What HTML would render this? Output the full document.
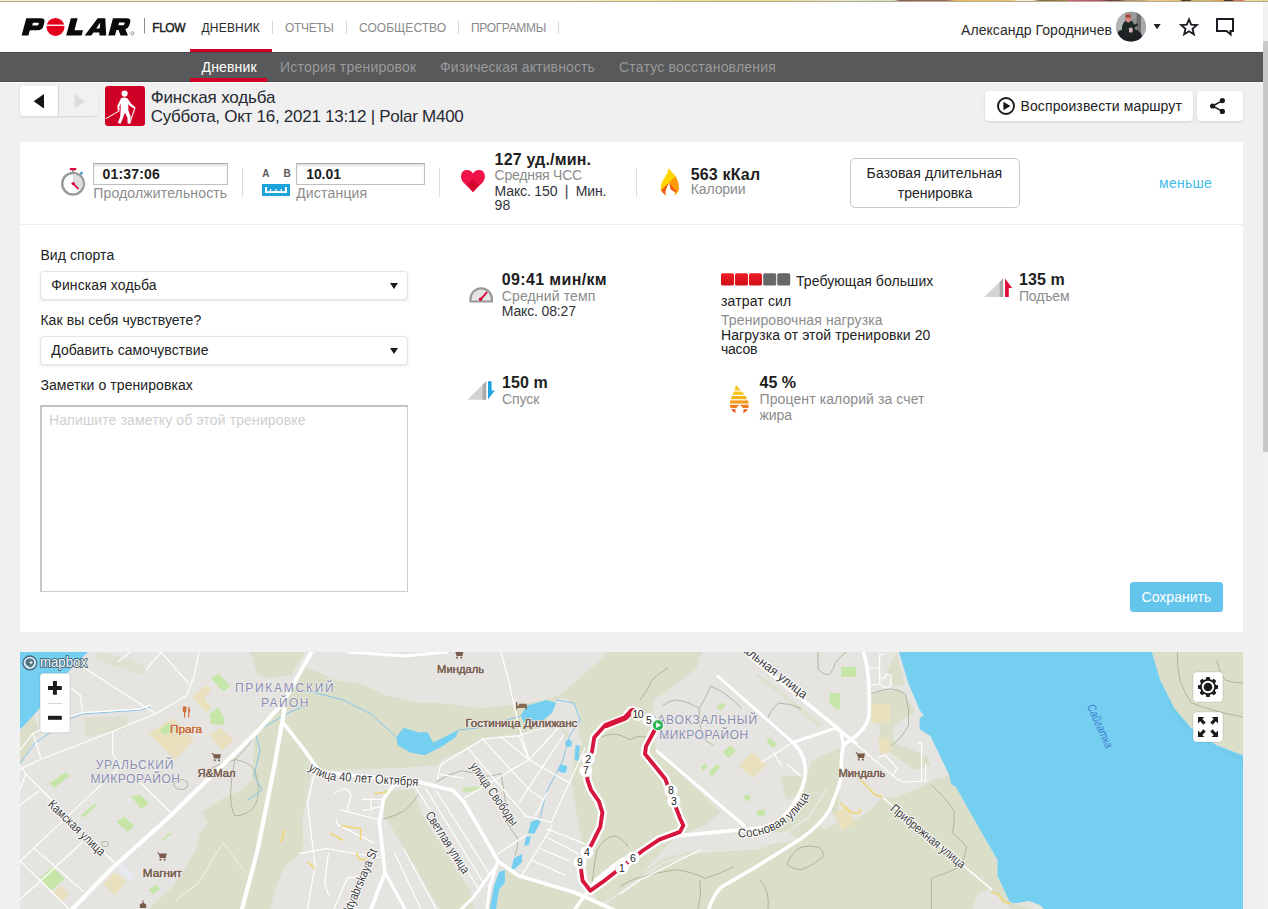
<!DOCTYPE html>
<html lang="ru">
<head>
<meta charset="utf-8">
<title>Polar Flow</title>
<style>
*{box-sizing:border-box;margin:0;padding:0}
html,body{width:1268px;height:909px;overflow:hidden;background:#f0f0f0}
body{font-family:"Liberation Sans",sans-serif;font-size:15px;color:#222;position:relative}
.abs{position:absolute}
.t{position:absolute;white-space:nowrap;line-height:1}
#topstrip{left:0;top:0;width:1268px;height:2px;background:linear-gradient(transparent 0,transparent 50%,#b3ad88 50%,#b3ad88 100%),linear-gradient(90deg,#f3efdc 0px,#f3efdc 560px,#efe6a8 620px,#ebdf90 760px,#e4e2d4 850px,#dcdcd0 894px,#8a5a60 900px,#9a6a68 947px,#e8b860 955px,#ecc470 1013px,#f4f0e4 1018px,#f0ead8 1033px,#80683c 1040px,#a08050 1066px,#c86080 1070px,#b85070 1100px,#6a3a4a 1110px,#7a4a50 1120px,#b08a70 1125px,#c8a078 1144px,#f0c890 1150px,#ecc080 1180px,#4a3020 1182px,#5a3c28 1190px,#d0b070 1192px,#d8b870 1212px,#e0a050 1214px,#e0a050 1223px,#3a2a2a 1225px,#4a3030 1232px,#d07060 1234px,#d07868 1243px,#f0d8a0 1246px,#ecd49c 1268px)}
#header{left:0;top:2px;width:1263px;height:50px;background:#fff}
#subnav{left:0;top:52px;width:1263px;height:30px;background:#58595b;border-top:1px solid #48494a;border-bottom:1px solid #4b4c4d;box-shadow:0 1px 0 #fafafa}
#sbar{left:1263px;top:2px;width:5px;height:907px;background:#f1f1f1}
#sthumb{left:1263px;top:41px;width:5px;height:411px;background:#c8c8c8}
.nav{font-size:12px;color:#8a8a8a;top:22px}
.navdiv{position:absolute;top:21px;width:1px;height:13px;background:#d6d6d6}
.sub{font-size:14px;color:#9a9a9a;top:60.4px}
.redbar{position:absolute;background:#d10027;height:3px}
.btn{position:absolute;background:#fff;border-radius:4px;box-shadow:0 1px 3px rgba(0,0,0,.13)}
.panel{position:absolute;background:#fff}
.gray{color:#8c8c8c}
.b{font-weight:bold;color:#1e1e1e}
.vdiv{position:absolute;top:168px;width:1px;height:29px;background:#dcdcdc}
.inp{position:absolute;top:163px;height:22px;background:#fff;border:1px solid #c0c0c0;border-top-color:#a9a9a9;box-shadow:inset 0 2px 2px rgba(0,0,0,.11)}
.sel{position:absolute;left:40px;width:368px;height:29px;background:#fff;border:1px solid #e4e4e4;border-radius:4px;box-shadow:0 1px 3px rgba(0,0,0,.11)}
.sel:after{content:"";position:absolute;left:349px;top:11px;border-left:4px solid transparent;border-right:4px solid transparent;border-top:6px solid #1c1c1c}
</style>
</head>
<body>
<div class="abs" id="header"></div>
<div class="abs" id="topstrip"></div>
<div class="abs" id="subnav"></div>
<div class="abs" id="sbar"></div>
<div class="abs" id="sthumb"></div>

<!-- HEADER -->
<svg class="abs" style="left:0;top:0" width="200" height="52" viewBox="0 0 200 52">
 <g transform="translate(0,35.6) skewX(-15) translate(0,-35.6)" fill="#0a0a0a" fill-rule="evenodd">
  <path d="M21.6,35.6 L21.6,18.2 L36,18.2 Q40.8,18.2 40.8,22.4 L40.8,25.9 Q40.8,30.2 36,30.2 L28.4,30.2 L28.4,35.6 Z M29.5,22.7 L34.6,22.7 Q35.6,22.7 35.6,24 Q35.6,25.4 34.6,25.4 L29.5,25.4 Z"/>
  <path d="M66.2,35.6 L66.2,18.2 L73,18.2 L73,30.2 L81.6,30.2 L81.6,35.6 Z"/>
  <path d="M84.7,35.6 L93,18.2 L100.6,18.2 L106.2,35.6 L99.4,35.6 L98.6,32.4 L92.6,32.4 L91.3,35.6 Z M94.3,28.6 L96.8,22.6 L97.8,28.6 Z"/>
  <path d="M108.3,35.6 L108.3,18.2 L122,18.2 Q126.6,18.2 126.6,22.2 L126.6,25 Q126.6,28.2 123.6,29 L127.9,35.6 L120.6,35.6 L117,30 L115,30 L115,35.6 Z M115.6,22.6 L120.4,22.6 Q121.4,22.6 121.4,23.8 Q121.4,25.2 120.4,25.2 L115.6,25.2 Z"/>
 </g>
 <circle cx="55.5" cy="26.9" r="9" fill="#e2001a"/>
 <rect x="46" y="24.6" width="19" height="1.3" fill="#fff"/>
 <circle cx="132.4" cy="33.4" r="1.6" fill="none" stroke="#333" stroke-width=".5"/>
 <rect x="144" y="18" width="1" height="15.5" fill="#8a8a8a"/>
</svg>
<span class="t" id="flow" style="left:152.3px;top:22px;font-size:12px;color:#222;font-weight:normal;-webkit-text-stroke:.45px #222;letter-spacing:-0.5px">FLOW</span>
<span class="t nav" id="n1" style="left:201.5px;color:#2a2a2a;letter-spacing:0.2px">ДНЕВНИК</span>
<span class="t nav" id="n2" style="left:285px;letter-spacing:-0.34px">ОТЧЕТЫ</span>
<span class="t nav" id="n3" style="left:359px;letter-spacing:0.03px">СООБЩЕСТВО</span>
<span class="t nav" id="n4" style="left:471px;letter-spacing:-0.34px">ПРОГРАММЫ</span>
<div class="navdiv" style="left:272px"></div>
<div class="navdiv" style="left:346px"></div>
<div class="navdiv" style="left:458px"></div>
<div class="navdiv" style="left:558px"></div>
<div class="redbar" style="left:190px;top:49px;width:82px"></div>

<span class="t" id="uname" style="left:961px;top:22.6px;font-size:14px;color:#2a2a2a;letter-spacing:0.06px">Александр Городничев</span>
<svg class="abs" style="left:1112px;top:8px" width="130" height="38" viewBox="1112 8 130 38">
 <defs><clipPath id="avc"><circle cx="1131" cy="26.700" r="14.900"/></clipPath></defs>
 <g clip-path="url(#avc)">
  <rect x="1116" y="11" width="30" height="31" fill="#8c8e90"/>
  <rect x="1116" y="12" width="9" height="18" fill="#b2b4b6"/>
  <rect x="1125" y="11" width="12" height="8" fill="#9a9c9e"/>
  <rect x="1136.500" y="12" width="4.500" height="26" fill="#6c6e70"/>
  <rect x="1141" y="14" width="5" height="22" fill="#a6a8aa"/>
  <ellipse cx="1129" cy="37" rx="13" ry="9" fill="#1d1f23"/>
  <ellipse cx="1128.500" cy="28.500" rx="6.600" ry="8.500" fill="#1e2925"/>
  <path d="M1132,27.500 L1137.600,24.300" stroke="#1e2925" stroke-width="2.200" fill="none"/>
  <circle cx="1128.300" cy="19.600" r="2.800" fill="#d3877c"/>
  <rect x="1125.500" y="14.600" width="5.600" height="3.200" rx="1" fill="#b5433e"/>
  <rect x="1129" y="27.800" width="3.600" height="4.800" rx=".8" fill="#d7b3bb"/>
 </g>
 <path d="M1153.5,24 L1160.7,24 L1157.1,29.2 Z" fill="#222"/>
 <path d="M1189.00,19.30 L1191.17,24.61 L1196.89,25.04 L1192.52,28.74 L1193.88,34.31 L1189.00,31.30 L1184.12,34.31 L1185.48,28.74 L1181.11,25.04 L1186.83,24.61 Z" fill="none" stroke="#1c1a22" stroke-width="1.800" stroke-linejoin="miter"/>
 <path d="M1217,19 L1233,19 L1233,31 L1230.6,31 L1230.6,34.4 L1226.6,31 L1217,31 Z" fill="none" stroke="#1c1a22" stroke-width="2" stroke-linejoin="miter"/>
</svg>

<!-- SUBNAV -->
<span class="t sub" id="s1" style="left:201.5px;color:#fff;letter-spacing:0.15px">Дневник</span>
<span class="t sub" id="s2" style="left:280px;letter-spacing:0.21px">История тренировок</span>
<span class="t sub" id="s3" style="left:440px;letter-spacing:0.12px">Физическая активность</span>
<span class="t sub" id="s4" style="left:619px;letter-spacing:0.19px">Статус восстановления</span>
<div class="redbar" style="left:190px;top:78px;width:77px;height:4px"></div>

<!-- TITLE ROW -->
<div class="btn" style="left:20px;top:86px;width:38px;height:30px;border-radius:4px 0 0 4px"></div>
<div class="abs" style="left:58px;top:86px;width:40px;height:30px;border-radius:0 4px 4px 0;background:#f1f1f1;box-shadow:0 1px 2px rgba(0,0,0,.10);border-left:1px solid #d8d8d8"></div>
<svg class="abs" style="left:20px;top:86px" width="80" height="30" viewBox="20 86 80 30">
 <path d="M44,94 L44,108.4 L33.6,101.2 Z" fill="#141414"/>
 <path d="M74.4,94 L74.4,108.4 L84.8,101.2 Z" fill="#dcdcdc"/>
</svg>
<svg class="abs" style="left:105px;top:86px" width="40" height="40" viewBox="0 0 40 40">
 <rect width="40" height="40" rx="3" fill="#d10027"/>
 <g fill="#fff" stroke="none">
  <circle cx="19.6" cy="7.6" r="3.1"/>
  <path d="M16.2,12 Q19.5,10.6 22.6,12.4 L26,17.6 L30.4,21.4 L29.4,22.8 L24.4,19.6 L23.2,18 L23.4,24.4 L25.6,30.2 L25.4,37.6 L22.6,37.6 L22.4,31.4 L19.8,26.4 L18.2,31.6 L15.6,37.8 L12.8,37 L15.2,30.6 L15.6,24 L15.8,17.6 L14.4,20.6 L14.6,24.4 L12.8,24.4 L12.4,19.8 Z"/>
 </g>
 <path d="M1,32.6 L14.6,24.6" stroke="#fff" stroke-width="1.1" fill="none"/>
 <path d="M30,21.8 L24.6,37.6" stroke="#fff" stroke-width="1.1" fill="none"/>
</svg>
<span class="t" id="ttl1" style="left:150.7px;top:88.50px;font-size:17px;color:#262a33;letter-spacing:-0.13px">Финская ходьба</span>
<span class="t" id="ttl2" style="left:150.7px;top:107.5px;font-size:17px;color:#262a33;letter-spacing:-0.27px">Суббота, Окт 16, 2021 13:12 | Polar M400</span>

<div class="btn" style="left:985px;top:91px;width:208px;height:30px"></div>
<div class="btn" style="left:1197px;top:91px;width:46px;height:30px"></div>
<svg class="abs" style="left:985px;top:91px" width="258" height="30" viewBox="985 91 258 30">
 <circle cx="1006" cy="106" r="8" fill="none" stroke="#1a1a1a" stroke-width="1.9"/>
 <path d="M1003.4,101.8 L1003.4,110.2 L1010.4,106 Z" fill="#1a1a1a"/>
 <g fill="#1a1a1a"><circle cx="1212.6" cy="106" r="2.6"/><circle cx="1222.4" cy="100.6" r="2.6"/><circle cx="1222.4" cy="111.4" r="2.6"/></g>
 <path d="M1222.4,100.6 L1212.6,106 L1222.4,111.4" fill="none" stroke="#1a1a1a" stroke-width="1.5"/>
</svg>
<span class="t" id="play" style="left:1020.5px;top:98.6px;font-size:14px;color:#222;letter-spacing:0.11px">Воспроизвести маршрут</span>

<!-- PANEL -->
<div class="panel" style="left:20px;top:142px;width:1223px;height:490px"></div>
<div class="abs" style="left:20px;top:224px;width:1223px;height:1px;background:#ededed"></div>

<!--SUMMARY-->
<svg class="abs" style="left:56px;top:150px" width="640" height="62" viewBox="56 150 640 62">
 <!-- stopwatch -->
 <rect x="72" y="170" width="2.2" height="3" fill="#9b9b9b"/>
 <rect x="69.8" y="168" width="6.4" height="2.2" fill="#d6083b"/>
 <path d="M79.800,173 L81.500,171.300 L83.200,173 L81.500,174.700 Z" fill="#29a3dc"/>
 <rect x="79.2" y="173.6" width="2.4" height="2.2" transform="rotate(45 80.4 174.7)" fill="#9b9b9b"/>
 <circle cx="73" cy="183.700" r="10.800" fill="#fff" stroke="#9b9b9b" stroke-width="2.500"/>
 <path d="M73,183.7 L73,173.9 A9.8,9.8 0 0 1 80.6,189.9 Z" fill="#dedede"/>
 <path d="M73.2,183.7 L78,188.6" stroke="#d6083b" stroke-width="1.7" stroke-linecap="round"/>
 <circle cx="73.2" cy="183.6" r="1.7" fill="#d6083b"/>
 <!-- distance ruler -->
 <rect x="262" y="184" width="28" height="12" fill="#1ea2dc"/>
 <g fill="#fff">
  <rect x="265" y="187" width="2" height="6"/><rect x="285" y="187" width="2" height="6"/>
  <rect x="265" y="191" width="22" height="2"/>
  <rect x="270" y="189" width="1.200" height="2.500"/><rect x="275.400" y="189" width="1.200" height="2.500"/><rect x="280.600" y="189" width="1.200" height="2.500"/>
 </g>
 <!-- heart -->
 <path d="M473,192.1 L463.2,182.2 C459.4,178.2 460.6,170 466.8,170 C470,170 472,171.8 473,173.6 C474,171.8 476,170 479.2,170 C485.4,170 486.6,178.2 482.8,182.2 Z" fill="#f0134a"/>
 <path d="M472.900,192.100 L466.700,185 L472.900,179 L479.100,185 Z" fill="#d7082f"/>
 <!-- flame -->
 <path d="M668.600,168.200 L675.200,175.800 Q678.400,181 679,187.700 Q679,190.500 677.200,192.400 L674.300,195.900 Q675.600,193.600 674.800,191.700 Q672.600,191 670.800,189.200 Q670,186 669,183 Q666.400,187 665.300,191.700 Q665.200,194 666.300,195.900 L661.900,191.700 Q660.200,189.600 660.600,187.700 Q661,184 662.400,181.300 L666.800,173.900 Q668.200,171 668.600,168.200 Z" fill="#ffd500"/>
 <path d="M675.600,175.900 Q678.400,181 679,187.700 Q679,190.500 677.200,192.400 L674.300,195.900 Q675.600,193.600 674.800,191.700 Q672.600,191 670.800,189.200 Q670,186 669,183 L669.200,182.400 Z" fill="#ff9a0a"/>
 <path d="M661.300,189.800 L669,183 Q666.400,187 665.300,191.700 Q665.200,194 666.300,195.900 L661.900,191.700 Q661,190.800 661.300,189.800 Z" fill="#f15a19"/>
 <path d="M669.600,183.800 L677,191.900 L674.800,191.700 Q672.600,191 670.800,189.200 Q670,186.400 669.600,183.800 Z" fill="#f4511e"/>
</svg>
<div class="inp" style="left:93px;width:135px"></div>
<div class="inp" style="left:296px;width:129px"></div>
<span class="t b" id="v1" style="left:102.6px;top:167.15px;font-size:14px;letter-spacing:0.17px">01:37:06</span>
<span class="t gray" id="l1" style="left:93.3px;top:186.45px;font-size:14px;letter-spacing:0.14px">Продолжительность</span>
<div class="vdiv" style="left:242px"></div>
<span class="t" id="ab1" style="left:262.2px;top:169.3px;font-size:10px;font-weight:bold;color:#5a5a5a">A</span>
<span class="t" id="ab2" style="left:283.4px;top:169.3px;font-size:10px;font-weight:bold;color:#5a5a5a">B</span>
<span class="t b" id="v2" style="left:306.2px;top:167.15px;font-size:14px;letter-spacing:-0.07px">10.01</span>
<span class="t gray" id="l2" style="left:296.2px;top:186.45px;font-size:14px;letter-spacing:0.19px">Дистанция</span>
<div class="vdiv" style="left:439px"></div>
<span class="t b" id="v3" style="left:494.6px;top:151.75px;font-size:16px;letter-spacing:0.17px">127 уд./мин.</span>
<span class="t gray" id="l3" style="left:494.6px;top:168.2px;font-size:14px;letter-spacing:-0.23px">Средняя ЧСС</span>
<span class="t" id="l3b" style="left:494.6px;top:184.15px;font-size:14px;color:#30323a;word-spacing:0;letter-spacing:-0.15px">Макс. 150&nbsp; |&nbsp; Мин.</span>
<span class="t" id="l3c" style="left:494.6px;top:197.65px;font-size:14px;color:#30323a">98</span>
<div class="vdiv" style="left:636px"></div>
<span class="t b" id="v4" style="left:690.7px;top:166.65px;font-size:16px;letter-spacing:0.17px">563 кКал</span>
<span class="t gray" id="l4" style="left:690.7px;top:182.40px;font-size:14px;letter-spacing:-0.11px">Калории</span>
<div class="abs" style="left:850px;top:158px;width:170px;height:50px;border:1px solid #c8c8c8;border-radius:5px;background:#fff"></div>
<span class="t" id="bt1" style="left:866.60px;top:166.2px;font-size:14px;color:#222;letter-spacing:0.11px">Базовая длительная</span>
<span class="t" id="bt2" style="left:897.80px;top:186.2px;font-size:14px;color:#222;letter-spacing:-0.03px">тренировка</span>
<span class="t" id="less" style="left:1159px;top:176.2px;font-size:14px;color:#41bce6;letter-spacing:0.26px">меньше</span>
<!--DETAILS-->
<span class="t" id="d1" style="left:40.4px;top:248.45px;font-size:14px;color:#222;letter-spacing:0.08px">Вид спорта</span>
<div class="sel" style="top:270.5px"></div>
<span class="t" id="d2" style="left:51.2px;top:278.15px;font-size:14px;color:#222;letter-spacing:0.1px">Финская ходьба</span>
<span class="t" id="d3" style="left:40.4px;top:313.45px;font-size:14px;color:#222;letter-spacing:0.07px">Как вы себя чувствуете?</span>
<div class="sel" style="top:335.5px"></div>
<span class="t" id="d4" style="left:51.2px;top:343.15px;font-size:14px;color:#222;letter-spacing:0.08px">Добавить самочувствие</span>
<span class="t" id="d5" style="left:40.4px;top:378.45px;font-size:14px;color:#222;letter-spacing:0.08px">Заметки о тренировках</span>
<div class="abs" style="left:40px;top:405px;width:368px;height:187px;background:#fff;border:1px solid #cdcdcd;border-top:2px solid #c2c2c2;border-left:2px solid #c6c6c6"></div>
<span class="t" id="d6" style="left:49.1px;top:413.45px;font-size:14px;color:#cfcfcf;letter-spacing:0.13px">Напишите заметку об этой тренировке</span>

<svg class="abs" style="left:460px;top:268px" width="560" height="150" viewBox="460 268 560 150">
 <!-- pace gauge -->
 <path d="M469.4,302.6 L469.4,299 A11.8,11.8 0 0 1 493,299 L493,302.6 Z" fill="#9a9a9a"/>
 <path d="M471.6,300.6 L471.6,299 A9.6,9.6 0 0 1 490.8,299 L490.8,300.6 Z" fill="#e4e4e4"/>
 <path d="M481.2,299.4 L481.2,289.6 A9.6,9.6 0 0 0 471.6,299.4 Z" fill="#d2d2d2" opacity=".0"/>
 <path d="M480.4,299.6 L486.6,292.6" stroke="#d6083b" stroke-width="1.9" stroke-linecap="round"/>
 <circle cx="480.6" cy="299.2" r="1.7" fill="#d6083b"/>
 <!-- load blocks -->
 <defs><linearGradient id="rg" x1="0" y1="0" x2="0" y2="1"><stop offset="0" stop-color="#ee1c25"/><stop offset="1" stop-color="#cf1019"/></linearGradient></defs>
 <rect x="721" y="273.2" width="13" height="12.3" rx="1.6" fill="url(#rg)"/>
 <rect x="735" y="273.2" width="13" height="12.3" rx="1.6" fill="url(#rg)"/>
 <rect x="749" y="273.2" width="13" height="12.3" rx="1.6" fill="url(#rg)"/>
 <rect x="763.2" y="273.2" width="13" height="12.3" rx="1.6" fill="#676767"/>
 <rect x="777.2" y="273.2" width="13" height="12.3" rx="1.6" fill="#676767"/>
 <!-- ascent -->
 <path d="M984.2,296.9 L1003.2,278.4 L1003.2,296.9 Z" fill="#d4d4d4"/>
 <path d="M999.6,282 L1003.2,278.4 L1003.2,296.9 L999.6,296.9 Z" fill="#a9a9a9"/>
 <path d="M1005,296.9 L1005,278.4 L1012.2,288 L1008.8,288 L1008.8,296.9 Z" fill="#e0103c"/>
 <!-- descent -->
 <path d="M467.3,399.7 L486.2,381.2 L486.2,399.7 Z" fill="#d4d4d4"/>
 <path d="M482.6,384.8 L486.2,381.2 L486.2,399.7 L482.6,399.7 Z" fill="#a9a9a9"/>
 <path d="M488,381.2 L491.6,381.2 L491.6,390.4 L494.8,390.4 L488,399.6 Z" fill="#1fa3e0"/>
 <!-- fat flame -->
 <defs><clipPath id="fl"><path d="M736,385 C738.4,388.6 748.8,396.8 748.8,404.4 C748.8,409 746.4,412 743,413 C745,409.6 742,407 739.6,404.6 C737.4,407 734,409.6 736,413 C732.4,412 729.9,409 729.9,404.6 C729.9,397 735,391.4 736,385 Z"/></clipPath></defs>
 <g clip-path="url(#fl)">
  <rect x="728" y="384" width="22" height="6.4" fill="#f6c51c"/>
  <rect x="728" y="391.6" width="22" height="3.2" fill="#f6c51c"/>
  <rect x="728" y="396" width="22" height="3.2" fill="#f5b21d"/>
  <rect x="728" y="400.4" width="22" height="3.2" fill="#f39c1f"/>
  <rect x="728" y="404.8" width="22" height="3.2" fill="#ee7d22"/>
  <rect x="728" y="409.2" width="22" height="4" fill="#e55a25"/>
 </g>
</svg>
<span class="t b" id="e1" style="left:501.8px;top:271.66px;font-size:16px;letter-spacing:0.35px">09:41 мин/км</span>
<span class="t gray" id="e2" style="left:501.8px;top:289.15px;font-size:14px;letter-spacing:0.13px">Средний темп</span>
<span class="t" id="e3" style="left:501.8px;top:304.15px;font-size:14px;color:#30323a;letter-spacing:-0.15px">Макс. 08:27</span>
<span class="t" id="e4" style="left:796px;top:273.65px;font-size:14px;color:#222;letter-spacing:0.07px">Требующая больших</span>
<span class="t" id="e5" style="left:721px;top:294.15px;font-size:14px;color:#222;letter-spacing:0.15px">затрат сил</span>
<span class="t gray" id="e6" style="left:721px;top:313px;font-size:14px;letter-spacing:0.1px">Тренировочная нагрузка</span>
<span class="t" id="e7" style="left:721px;top:328.15px;font-size:14px;color:#222;letter-spacing:0.1px">Нагрузка от этой тренировки 20</span>
<span class="t" id="e8" style="left:721px;top:341.85px;font-size:14px;color:#222;letter-spacing:-0.23px">часов</span>
<span class="t b" id="e9" style="left:1019px;top:271.66px;font-size:16px;letter-spacing:0.07px">135 m</span>
<span class="t gray" id="e10" style="left:1019px;top:289px;font-size:14px;letter-spacing:-0.2px">Подъем</span>
<span class="t b" id="e11" style="left:502px;top:374.60px;font-size:16px;letter-spacing:0.12px">150 m</span>
<span class="t gray" id="e12" style="left:502px;top:392.15px;font-size:14px;letter-spacing:-0.09px">Спуск</span>
<span class="t b" id="e13" style="left:759.6px;top:374.60px;font-size:16px;letter-spacing:0.01px">45 %</span>
<span class="t gray" id="e14" style="left:759.6px;top:392.15px;font-size:14px;letter-spacing:0.09px">Процент калорий за счет</span>
<span class="t gray" id="e15" style="left:759.6px;top:407.75px;font-size:14px;letter-spacing:-0.14px">жира</span>
<div class="abs" style="left:1130px;top:582px;width:93px;height:30px;background:#64c5ec;border-radius:3.5px"></div>
<span class="t" id="save" style="left:1141.6px;top:590.15px;font-size:14px;color:#fff;letter-spacing:0.01px">Сохранить</span>
<!--MAP-->
<svg class="abs" id="map" style="left:20px;top:652px" width="1223" height="257" viewBox="20 652 1223 257" font-family="Liberation Sans, sans-serif">
 <rect x="20" y="652" width="1223" height="257" fill="#e5e4e0"/>
 <!-- green areas -->
 <g fill="#dbdfc9">
  <path d="M250,652 L305,652 L291.700,674.700 L270.900,678.500 L257.600,674.700 Z"/>
  <path d="M20,731.500 L33,714.500 L39,731.500 L20,765.600 Z"/>
  <path d="M95.700,652 L126,657.700 L148.700,669 L141,674.700 L95.700,659.600 Z" opacity=".7"/>
  <path d="M84.400,718 L126,716.400 L129.800,727.700 L86,737 Z" opacity=".8"/>
  <!-- main band + forest + south strip -->
  <path d="M301,667 L316,671 L337,680.400 L361.700,684 L386.300,695.500 L420,703 L440,703 L480,708 L520,704 L545,700 L562,693.600 L577,680.400 L596,663.400 L609.300,652 L702,652 L696.400,669 L654,700 L651,731 L656.800,751 L721,812 L706,824.500 L685,834 L676.600,835.900 L662,851 L640,875 L664,858 L691,852 L755,848 L765,845 L800,840 L790,833 L745.700,829.600 L747.600,829 L778.400,821.700 L801,800 L805.300,780 L812,760 L840,748 L841,780 L838,800 L840,832 L851.800,822.500 L871.500,808.700 L882.300,797 L897,797 L918.700,788 L932.500,780.200 L949.300,775.300 L951.200,784 L956,787 L968,808.700 L997.500,860 L997.500,875.700 L1009.300,901.300 L1013.200,903.200 L1033,909 L487,909 L497,880 L503,868 L518,877 L574.600,894 L603,907 L591.600,892.500 L583,850 L571.800,785 L574.600,745.400 L569,734 L566,737 L560.500,725.500 L518,734 L484,738 L467,748 L441.600,759.500 L438.800,765 L402,768 L320,770.800 L312.500,769.400 L310,780 L302.500,817.900 L303.500,852 L285.500,865 L276,886 L270.400,909 L149,909 L156.800,901 L172,888 L183.300,870.900 L198.400,846 L198.400,835 L208,823.500 L202,812 L225,797 L240,791 L251.400,780 L253,760 L255.700,727.700 L283,703 Z"/>
  <path d="M384.200,790 L413.600,788.900 L421,813.500 L470.400,891 L474,909 L440,909 L406,851.400 L389,823 L384.200,817 Z"/>
  <path d="M870.200,696.200 L877.400,691.700 L892.900,690.600 L897.300,687.900 L903.900,694 L915,711.600 L903.900,718.200 L892.900,727 L892.900,738.100 L897.300,745 L907,747.700 L926.600,755.600 L931,765 L915,770 L900,760 L879.600,745 L879.600,724.900 L870.800,722 Z"/>
  <path d="M896.200,652 L905,685 L892.900,685 L887.400,670.800 Z"/>
  <path d="M781,776 L804,776 L804,794 L786,800 Z"/>
  <path d="M754.600,674.700 L758.400,673.800 L822.800,723.900 L819,727.700 Z" opacity=".7"/>
  <path d="M1151.800,652 L1160.300,680.300 L1174.500,708.500 L1191.400,728.300 L1216.900,745.300 L1243,755.200 L1243,652 Z"/>
 </g>
 <!-- gray patches on green -->
 <g fill="#e5e4e0">
  <path d="M977.800,893.400 L989.600,889 L995.500,893.400 L1005.400,903.200 L1011,909 L971.900,909 Z"/>
  <path d="M818,820 L832,812 L838,822 L824,830 Z"/>
  <path d="M556,700 L564,697.500 L575.200,705 L580.900,716.400 L578,733 L583,746 L574,746 L569,734 L560.500,725.500 L545,722 L552,713 Z"/>
 </g>
 <path d="M600,907 L662,863 L700,852 L763,848 L808,818 L826,790" fill="none" stroke="#e9e8e3" stroke-width="1.600"/>
 <g fill="none" stroke="#f3f4e6" stroke-width="1">
  <path d="M175.700,901 L198.400,883 L223,842.500 L245.700,872.700"/>
 </g>
 <!-- contours -->
 <g fill="none" stroke="#98a384" stroke-width=".800" stroke-linejoin="round" opacity=".85">
  <ellipse cx="181" cy="784.500" rx="7" ry="5"/>
  <ellipse cx="105" cy="844" rx="3.600" ry="2.600"/>
  <path d="M201,776 Q210,768 218,765 Q228,763 235,759.500 Q248,748 254.800,734"/>
  <path d="M235,759.500 Q250,762 254.800,770.800 Q260,786 257.600,799 Q254,810 246.300,813 Q240,816 235,816 Q230,806 230.700,793.400 Q231,775 235,759.500"/>
  <path d="M436,782 Q448,774 461.400,770.800 Q474,772 484,776.500 Q494,776 501,773.600 Q506,800 506.700,821.700 Q512,832 518,838.700 Q518,848 515.200,855.700"/>
  <path d="M383.600,819 Q396,816 404.900,810.400 Q414,802 419,793.400"/>
  <path d="M601.500,737 Q608,734 614,734 Q623,735 630,739.700 Q640,733 651,739.700"/>
  <path d="M591.600,892.500 Q593,868 597.200,850 Q604,838 614,835.900 Q623,838 628.400,847.200"/>
  <path d="M662.400,705.700 Q669,700 676.600,700 Q690,702 699.200,708.600 Q706,698 710.500,686 Q722,690 733,700 L741.600,708.600"/>
  <path d="M699.200,708.600 Q699,724 702,736.900 Q707,742 713.400,745.400"/>
  <path d="M767,720 Q771,709 778.400,703 Q790,703 801,708.600"/>
  <path d="M818,652 L818,669 Q823,675 829.300,674.600 Q834,670 835,663.300 Q840,656 846.300,652"/>
  <path d="M869,694.400 Q880,690 891.600,688.800 Q900,690 905.700,694.400 Q910,710 908.500,725.500 Q902,738 891.600,745.400"/>
  <path d="M787,864 Q792,852 801,847.200 Q810,845 818,847.200 Q823,850 823.700,855.700 Q814,865 801,869.800 Q792,869 787,864"/>
  <path d="M620,886.800 Q628,881 637,878.300 Q658,872 676.600,869.800 Q692,872 704.900,878.300 Q720,874 733,867"/>
  <path d="M931.300,784.900 Q944,796 954,810.300 Q955,822 952.500,833 Q961,839 966.600,847 Q965,858 959.600,866.900 Q946,874 931.300,878.200 L931.300,909"/>
  <path d="M1177.300,652 Q1177,667 1180,680.300 Q1184,693 1191.400,702.900 Q1215,712 1243,717"/>
  <path d="M1216.900,660.500 Q1219,672 1225.400,680.300 Q1234,683 1243,683"/>
  <path d="M640,700 Q648,690 652,680 Q660,672 668,668"/>
  <path d="M700,880 Q702,895 698,909"/>
  <path d="M760,880 Q770,890 768,909"/>
 </g>
 <!-- tan patches -->
 <g fill="#e9e0be">
  <path d="M148.700,733.400 L173.300,718.200 L194,739 L175.200,760 Z"/>
  <path d="M210.200,735.300 L220.600,727.700 L233.900,740 L222.500,750.400 Z"/>
  <path d="M192.200,697.400 L206.400,685 L211.200,689.900 L204.600,699.300 L211.200,706.900 L206.400,712.600 Z"/>
  <path d="M103.300,883.900 L114.600,872.500 L126,881 L114.600,895.200 Z"/>
  <path d="M53,891.400 L60.700,885.700 L69.200,894.300 L62.600,901 Z"/>
  <path d="M738.800,766 L752,752.400 L767,764 L753,778 Z"/>
  <rect x="871.300" y="703.900" width="18.800" height="18.800"/>
  <path d="M835,812 L848,806 L854.800,824 L842,830 Z"/>
  <path d="M878,738 L889,737 L891,752 L880,754 Z"/>
 </g>
 <path d="M114.600,864 L122.200,864 L134.500,875.300 L129.800,881 Z" fill="#e9e9f1"/>
 <!-- bright green patches -->
 <g fill="#c5e6a6">
  <path d="M211.200,678.500 L218.800,673.800 L230,686 L223.500,691.700 Z"/>
  <path d="M209.300,714.500 L217.800,707.800 L224.400,718.200 L224.400,724.900 L211.200,724 Z"/>
  <path d="M160,729.600 L169.500,723 L177,727.700 L169.500,733.400 L162,734.300 Z"/>
  <path d="M49.300,783.500 L65.400,772.200 L70.200,775 L54,788.300 Z"/>
  <path d="M130.700,795.800 L141,794.900 L148.700,803.400 L141,809 Z"/>
  <path d="M116.500,821.400 L124,816.700 L134.500,826 L127,831.800 Z"/>
  <path d="M80.600,815.700 L94.800,803.400 L96.700,805.300 L83.400,817.600 Z"/>
  <path d="M39.900,878 L53,866.800 L64.500,879 L51.200,890.500 Z"/>
  <path d="M148.700,890.500 L155.300,884.800 L160,888.600 L153.400,894.300 Z"/><path d="M162,839.400 L170.500,832.700 L171.400,834.300 L163.300,840.700 Z"/>
  <rect x="841" y="666.900" width="14.900" height="9.900"/>
  <path d="M829.400,692.900 L839.900,692.900 L839.900,709.400 L836.600,709.400 L829.400,702.800 Z"/>
  <path d="M723,752 L731,745 L736,751 L728,758 Z"/>
  <path d="M765.700,741 L770,738 L777,744 L773,748 Z"/>
  <path d="M700.600,767 L705,763.700 L707.700,767 L703,770.800 Z"/>
  <path d="M709,772 L717,763.700 L720,767 L712,776.500 Z"/>
  <rect x="744.500" y="795" width="5.500" height="5.500" transform="rotate(-30 747 798)"/>
  <rect x="757" y="810" width="8" height="6" transform="rotate(-20 761 813)"/>
  <rect x="717.600" y="704" width="7" height="5" transform="rotate(-40 721 706)"/>
  <path d="M462,787.800 L481,786.100 L481.900,789.400 L463.700,792.700 Z" opacity=".8"/>
 </g>
 <!-- water -->
 <g fill="#75cff0">
  <path d="M20,652 L87.900,652 L70.900,669 L53.900,688.800 L37,711.400 L20,729.800 Z"/>
  <path d="M396.400,736.900 L403.500,727.800 L419,732.600 L427.500,732 L433,742.500 L444.500,736.900 L458.600,729.800 L455.800,736.900 L441.600,746.800 L424.700,755.300 L410.500,752.400 L397.800,745.400 Z"/>
  <path d="M520.800,715.600 L526.500,705.700 L546.300,700 L556.200,702.900 L552,712.800 L543.500,719.900 L523.700,722.700 Z"/>
  <rect x="565.500" y="740" width="6.300" height="6.800" rx="2"/>
  <path d="M575.600,745.400 L579.700,745.400 L578.700,760.900 L574.600,760 Z"/>
  <rect x="559" y="765" width="7.700" height="7.600" rx="2" transform="rotate(15 563 769)"/>
  <path d="M528,833 L531,822 L538,819 L540.700,822 L534,834 Z"/>
  <path d="M524,846 L526,837 L531,836 L529,845 Z"/>
  <path d="M511,870 L514,858 L522,854 L522,862 L516,868 Z"/>
  <path d="M489.700,909 L494,886 L499,872 L505,870 L505,882 L499,890 L496,909 Z"/>
  <path d="M898.900,652 L908.300,682.900 L919.400,709.400 L923.800,715.500 L919.400,718.200 L919.900,729.300 L930.400,735.900 L934.800,745 L949.300,775.300 L951.200,784 L956,787 L968,808.700 L997.500,860 L997.500,875.700 L1009.300,901.300 L1013.200,903.200 L1017,903 L1029,901 L1040,905 L1044,909 L1243,909 L1243,755.200 L1216.900,745.300 L1191.400,728.300 L1174.500,708.500 L1160.300,680.300 L1151.800,652 Z"/>
 </g>
 <path d="M1166,700 L1180,722 L1200,740 L1243,762 L1243,757 L1216,747 L1191,730 L1173,710 Z" fill="#6cc4e8" opacity=".6"/>
 <!-- creeks -->
 <g fill="none" stroke="#86c5ea" stroke-width="1">
  <path d="M20,763.700 L35,742.900 L71,718 L82.500,714 L141,710 L150.600,707"/>
  <path d="M396,737 L371,714 L343,700 L320,694 L300,690"/>
  <path d="M458,730 L478,728 L500,722 L521,716"/>
  <path d="M556,700 L574,703 L580,720 L569,737 L563,760 L546,793 L540,819"/>
  <path d="M256,735 L264,727 L276,720 L290,712 L305,706"/>
  <path d="M256,735 L260,750 L254,775 L262,790 L248,800"/>
 </g>
 <!--ROADS-->
 <g fill="none" stroke="#fff" stroke-linecap="round" stroke-linejoin="round">
  <!-- minor -->
  <g stroke-width="1.2">
   <path d="M20,769.400 L39,760 L112.700,731.500 L156.300,713.500 L186.600,695.500 L194,676.600 L199,652"/>
   <path d="M71,659.600 L155.300,713.500"/>
   <path d="M161,652 L145.900,670 M161,652 L188.500,683.200 M129.800,652 L118.400,661.500"/>
   <path d="M71,688 L80.600,695.500 L82.500,712.600 L141,708.800 L150.600,705"/>
   <path d="M112.700,731.500 L112.700,754 L122,768"/>
   <path d="M33,733.400 L40.800,758"/>
   <path d="M20,750 L33,733.400 L71,716 L82.500,712.600"/>
   <path d="M25.700,774 L114.600,863"/><path d="M141,783.500 L170.500,812"/>
   <path d="M34,848 L83.400,891.400"/><path d="M20,861 L69,909"/>
   <path d="M118.400,768.400 L20,861"/><path d="M82.500,842 L34,887 L20,899"/>
   <path d="M20,805 L39,791"/><path d="M20,790 L25.700,774 L20,765"/>
   <path d="M315,770 L307.600,804 L315,864.600 L307.600,909"/>
   <path d="M335,792.700 L345.400,788 L351,794.600 L347.300,810.700"/>
   <path d="M339.700,809.700 L379.500,820"/><path d="M336,819.200 L337.900,824.900 L373.800,842.900"/>
   <path d="M300,853.300 L326.500,848.600 L381.400,858"/>
   <path d="M362.500,799.300 L383.300,799.300 M362.500,810.700 L379.500,806.900 M371,799.300 L371,810.700"/>
   <path d="M334,909 L347.300,877.900 L362,876"/><path d="M328.400,853.300 L324.600,883.600 L328.400,895"/>
   <path d="M501,652 L508,677.500 L518,722.700 L529,759.500"/>
   <path d="M437.300,779.500 L440.600,764.700 L467.900,748.200 L482.700,739 L519,735.800 L535.500,730 L556,726"/>
   <path d="M467.900,748.200 L525.600,815.800 L552,822.400"/>
   <path d="M482.700,739 L528.900,789.400 L542.900,799.300"/>
   <path d="M500.900,736.600 L528.900,759.700 L569.300,782.800"/>
   <path d="M519,735.800 L528.900,759.700"/>
   <path d="M440.600,774.600 L464.600,778"/>
   <path d="M464.600,797.700 L528.900,759.700 L552,735 L558,728"/>
   <path d="M519,802.600 L563.600,735"/>
   <path d="M535.500,815.800 L547,792.700"/>
   <path d="M552,820.800 L585,748.200"/>
   <path d="M497.600,853.800 L525.600,835.600"/>
   <path d="M520.700,876.900 L547.900,833 L552,824.900"/>
   <path d="M547,829 L585,843.900"/><path d="M547,837.300 L578.400,853.800"/>
   <path d="M540.500,848.800 L568.500,860.400"/><path d="M532.200,860.400 L565.200,875.200"/>
   <path d="M415.500,787 L479.800,891"/><path d="M436.300,790.800 L489.300,874"/>
   <path d="M394.600,853.300 L421,909"/><path d="M404,849.500 L436.300,909"/>
   <path d="M426,789 L484,884"/>
   <path d="M792.600,742.500 L761.400,762.300"/><path d="M773,752 L781,765"/><path d="M788,765 L801,776"/>
   <path d="M855.700,743.800 L897,779 L903,782 L925.600,781 L925.600,763.500"/><path d="M917.700,742.800 L921.600,742.800 L921.600,781"/>
   <path d="M878,757 L885,755 L897,768 L893,776"/><path d="M870,668 L879.600,668 L879.600,655 L884,654"/><path d="M879.600,668 L879.600,684 L870,685"/><path d="M879.600,678 L885,678 L886,674 L891,675 L891,684 L889,687 L883,687 L881,684"/>
   <path d="M620,894 L640,880 L700,850"/>
  </g>
  <g stroke-width="1.600">
   <path d="M882.300,797 L991.600,889.400"/>
  </g>
  <!-- secondary -->
  <g stroke-width="3">
   <path d="M348,652 L405,656 L447,652"/>
   <path d="M744.500,652 L837.800,728.400" stroke-width="3.600"/>
   <path d="M717.600,676 L789.700,739.700"/>
   <path d="M656.800,751 L744.500,826"/>
   <path d="M792.600,742.500 L835,728.400"/>
   <path d="M498,861 L489.700,886.800 L487,909"/>
   <path d="M495.400,867 L472.800,898 L461.400,909"/>
   <path d="M385,872.600 L405,909"/>
  </g>
  <!-- major -->
  <g stroke-width="4.200">
   <path d="M311.400,652 L283,703 L254.800,734 L167,819 L113.400,867 L72.300,909"/>
   <path d="M284.500,708.600 L274.600,765 L257.600,850 L242,909"/>
  </g>
  <g stroke-width="3.600">
   <path d="M283,722.700 L302.900,748 L320,772 L370,777 L419,782 L453,790.600 L464,802 L498,861 L518,875.500 L574.600,892.500 L603,905 L625,915"/>
   <path d="M419,782 L393.500,785 L383.600,799 L379.400,821.700 L385,872.600 L371,909"/>
   <path d="M789.700,739.700 C800,748 806,760 805.300,773.600 C804,790 792,810 778.400,821.700 C765,828 750,830 738.800,830 L676.600,835.900 C660,840 640,850 620,861 L596,880 L575,909"/>
   <path d="M863.300,652 C868,665 870,690 869,717 C866,727 860,733 854.800,736.900 L843.500,745.400 C840,757 842,770 840.700,779.300 C838,790 834,800 829.300,810.400 C822,822 812,831 801,838.700 L755.800,867 L721.800,886.800 C714,894 711,902 709,909"/>
  </g>
  <path d="M837.800,728.400 L856,743.500 M835,728.400 L841,731.500 L843.500,745.400" stroke-width="3.200"/>
 </g>
 <g fill="none" stroke="#ecd772" stroke-width="1.600" stroke-linecap="round">
  <path d="M855.700,775 L865.600,785 L875.400,795 L882.300,797"/>
  <path d="M840,803 L851.800,812.700 L858.700,813.700 L860.600,809.700"/>
  <path d="M330.300,833.400 L342.600,840"/><path d="M341.600,825.800 L360.600,828.700 L360.600,839"/><path d="M356.800,853.300 L358.700,859 L366.200,860"/>
  <path d="M285,830 L281,842"/><path d="M308.500,862.700 L314.200,868.400"/><path d="M374.800,793.700 L387,791.800"/>
  <path d="M991.600,892.400 L997.500,893.400 L1003.400,901.300 L1009.300,903.200"/>
 </g>
 <!--ROUTE-->
 <g fill="none" stroke-linecap="round" stroke-linejoin="round">
  <path id="rt" d="M658,725.200 L653.900,731.500 L646,746.400 L645,754 L665,778.400 L668,786 L680,818.300 L683.300,825.400 L680,831.800 L659.200,839.600 L642.200,851 L615.200,872.200 L602.400,882.200 L590.400,890.700 L582.600,880.800 L581.200,870.800 L580.600,862 L586.800,852.400 L591.800,843.900 L600.300,826.800 L602.400,812.600 L598.900,801.300 L591,790 L587.500,780 L586.500,768 L588,759 L592,752 L594.200,737.500 L604,726.500 L625,718 L631,710.500 L636,711.500" stroke="#fff" stroke-width="8.600"/>
  <path d="M658,725.200 L653.900,731.500 L646,746.400 L645,754 L665,778.400 L668,786 L680,818.300 L683.300,825.400 L680,831.800 L659.200,839.600 L642.200,851 L615.200,872.200 L602.400,882.200 L590.400,890.700 L582.600,880.800 L581.200,870.800 L580.600,862 L586.800,852.400 L591.800,843.900 L600.300,826.800 L602.400,812.600 L598.900,801.300 L591,790 L587.500,780 L586.500,768 L588,759 L592,752 L594.200,737.500 L604,726.500 L625,718 L631,710.500 L636,711.500" stroke="#d7153d" stroke-width="3.900"/>
  <path d="M606,725.500 L625,718 L633,710.500 L637,712" stroke="#d7153d" stroke-width="5.400"/>
 </g>
 <!--LABELS-->
 <g font-size="12" fill="#898eb4" text-anchor="middle" stroke="#eeedea" stroke-width="1.600" paint-order="stroke" stroke-linejoin="round">
  <text x="284.300" y="691.900" textLength="98.800" lengthAdjust="spacing">ПРИКАМСКИЙ</text>
  <text x="284.700" y="707" textLength="47.300" lengthAdjust="spacing">РАЙОН</text>
  <text x="134.500" y="768.600" textLength="77.600" lengthAdjust="spacing">УРАЛЬСКИЙ</text>
  <text x="135.200" y="782.800" textLength="89.600" lengthAdjust="spacing">МИКРОРАЙОН</text>
  <text x="703" y="724.300" textLength="108" lengthAdjust="spacing">ЗАВОКЗАЛЬНЫЙ</text>
  <text x="703.700" y="739.200" textLength="89" lengthAdjust="spacing">МИКРОРАЙОН</text>
 </g>
 <g font-size="11.500" fill="#7a6353" text-anchor="middle" stroke="#f3f1ee" stroke-width="1.800" paint-order="stroke" stroke-linejoin="round">
  <text x="186" y="732.500" fill="#c9703a" textLength="32" lengthAdjust="spacingAndGlyphs">Прага</text>
  <text x="216.600" y="777" textLength="38" lengthAdjust="spacingAndGlyphs">Я&amp;Мал</text>
  <text x="162.300" y="876.500" textLength="39" lengthAdjust="spacingAndGlyphs">Магнит</text>
  <text x="460.600" y="672.500" textLength="47" lengthAdjust="spacingAndGlyphs">Миндаль</text>
  <text x="521.400" y="727" textLength="112" lengthAdjust="spacingAndGlyphs">Гостиница Дилижанс</text>
  <text x="861.900" y="776.500" textLength="47" lengthAdjust="spacingAndGlyphs">Миндаль</text>
 </g>
 <g font-size="11.500" fill="#7a6353" text-anchor="middle" stroke="#7a6353" stroke-width=".350">
  <text x="186" y="732.500" fill="#c9703a" stroke="#c9703a" textLength="32" lengthAdjust="spacingAndGlyphs">Прага</text>
  <text x="216.600" y="777" textLength="38" lengthAdjust="spacingAndGlyphs">Я&amp;Мал</text>
  <text x="162.300" y="876.500" textLength="39" lengthAdjust="spacingAndGlyphs">Магнит</text>
  <text x="460.600" y="672.500" textLength="47" lengthAdjust="spacingAndGlyphs">Миндаль</text>
  <text x="521.400" y="727" textLength="112" lengthAdjust="spacingAndGlyphs">Гостиница Дилижанс</text>
  <text x="861.900" y="776.500" textLength="47" lengthAdjust="spacingAndGlyphs">Миндаль</text>
 </g>
 <!-- poi icons -->
 <g fill="#7a5a49">
  <path d="M182.800,706.500 L182.800,711 Q182.800,712.200 184,712.400 L184,717.400 L185.200,717.400 L185.200,712.400 Q186.400,712.200 186.400,711 L186.400,706.500 Z M188.200,706.500 Q190.200,707.500 190.200,711.500 L189.400,712.400 L189.400,717.400 L188.200,717.400 Z" fill="#d2703a"/>
  <g id="cart"><path d="M211.400,753 L213,753 L213.600,754.200 L221,754.200 L220,758.600 L214.200,758.600 L213,755 Z"/><rect x="213.800" y="759.400" width="1.800" height="1.800"/><rect x="218" y="759.400" width="1.800" height="1.800"/></g>
  <use href="#cart" x="-54.300" y="99.300"/>
  <use href="#cart" x="242.400" y="-102.700"/>
  <use href="#cart" x="644" y="-0.700"/>
  <path d="M516,702 L517.400,702 L517.400,705.400 L519,705.400 L519,703.800 L525.600,703.800 Q527,703.800 527,705.400 L527,709.600 L525.600,709.600 L525.600,708 L517.400,708 L517.400,709.600 L516,709.600 Z" fill="#8a6a4e"/>
  <path d="M139.800,908 L139.800,904.600 L143,902.400 L146.200,904.600 L146.200,908 Z M142.400,900.600 L143.600,900.600 L143.600,902.400 L142.400,902.400 Z"/>
 </g>
 <!-- road labels -->
 <g font-size="12.800" fill="#3a3a3a" text-anchor="middle" stroke="#fff" stroke-width="2" paint-order="stroke" stroke-linejoin="round">
  <text x="76.800" y="832.200" transform="rotate(44 76.800 828)" textLength="74" lengthAdjust="spacingAndGlyphs">Камская улица</text>
  <text textLength="113" lengthAdjust="spacingAndGlyphs"><textPath href="#let40" startOffset="50%">улица 40 лет Октября</textPath></text>
  <text x="494" y="798" transform="rotate(55 494 794)" textLength="74" lengthAdjust="spacingAndGlyphs">улица Свободы</text>
  <text x="447.600" y="846.600" transform="rotate(57.500 447.600 842.400)" textLength="70.600" lengthAdjust="spacingAndGlyphs">Светлая улица</text>
  <text x="359.100" y="888" transform="rotate(-66.800 359.100 883.800)" textLength="75" lengthAdjust="spacingAndGlyphs">Oktyabrskaya St</text>
  <text x="765" y="668" transform="rotate(38 765 664)" textLength="104" lengthAdjust="spacingAndGlyphs">Вокзальная улица</text>
  <text x="928" y="840.400" transform="rotate(39.500 928 836.300)" textLength="93" lengthAdjust="spacingAndGlyphs">Прибрежная улица</text>
  <text textLength="88" font-size="12.500" lengthAdjust="spacingAndGlyphs"><textPath href="#sosn" startOffset="50%">Сосновая улица</textPath></text>
 </g>
 <path id="let40" d="M305.500,767.500 Q317,778.500 336,780.700 L421,786.400" fill="none"/>
 <path id="sosn" d="M737,837.500 C768,838 796,824 810,794" fill="none"/>
 <text x="1100" y="730" transform="rotate(66 1100 726)" font-size="12" font-style="italic" fill="#3f7fd0" text-anchor="middle" textLength="47" lengthAdjust="spacingAndGlyphs">Сайгатка</text>
 <!--MARKERS-->
 <g font-size="10.500" text-anchor="middle" fill="#1c1c1c">
  <g fill="#fff" stroke="#dcdcdc" stroke-width=".5">
   <circle cx="588.200" cy="759" r="6.700"/><circle cx="585.800" cy="770.400" r="6.700"/>
   <circle cx="586.800" cy="852.400" r="6.700"/><circle cx="580" cy="862.300" r="6.700"/>
   <circle cx="622" cy="868" r="6.700"/><circle cx="633" cy="857.800" r="6.700"/>
   <circle cx="671" cy="790.600" r="6.700"/>
   <circle cx="637.800" cy="714.400" r="6.700"/><circle cx="648.900" cy="719.900" r="6.700"/>
  </g>
  <text x="588.200" y="762.800">2</text><text x="585.800" y="774.200">7</text>
  <text x="586.800" y="856.200">4</text><text x="580" y="866.100">9</text>
  <text x="622" y="871.800">1</text><text x="633" y="861.600">6</text>
  <text x="671" y="794.400">8</text>
  <circle cx="673.800" cy="800.900" r="6.700" fill="#fff" stroke="#dcdcdc" stroke-width=".5"/>
  <text x="673.800" y="804.700">3</text>
  <text x="637.800" y="718.200" letter-spacing="-.5">10</text><text x="648.900" y="723.700">5</text>
  <circle cx="658" cy="725.200" r="5.600" fill="#2fb45a" stroke="#fff" stroke-width="1"/>
  <path d="M656.200,722.300 L656.200,728.100 L661,725.200 Z" fill="#fff"/>
 </g>
 <!--CONTROLS-->
 <!-- mapbox logo -->
 <g>
  <circle cx="29.900" cy="662.900" r="6.900" fill="#e3f1f8" fill-opacity=".85" stroke="#3f5a6b" stroke-width="1.300" stroke-opacity=".9"/>
  <path d="M29.600,658.400 C26.600,658.400 25,660.800 25.600,663.200 C26.200,665.400 28.400,666.400 30.600,667.400 C32.600,666.200 34.200,664.400 34.200,662.400 C34.200,660 32.200,658.400 29.600,658.400 Z" fill="#3f5a6b" fill-opacity=".85"/>
  <path d="M31,660.400 L31.700,661.900 L33.200,662.600 L31.700,663.300 L31,664.800 L30.300,663.300 L28.800,662.600 L30.300,661.900 Z" fill="#e3f1f8"/>
  <text x="40" y="667" font-size="14.500" font-weight="normal" fill="#f2f9fc" stroke="#3f5a6b" stroke-width="2.200" stroke-opacity=".85" paint-order="stroke" stroke-linejoin="round" textLength="47" lengthAdjust="spacingAndGlyphs">mapbox</text>
 </g>
 <g>
  <rect x="40" y="673.300" width="30" height="59.400" rx="3.500" fill="#fff" stroke="rgba(0,0,0,.08)" stroke-width="1.400"/>
  <rect x="48" y="703" width="14.600" height="1" fill="#d6d6d6"/>
  <path d="M48,687.900 L61.800,687.900 M54.900,681 L54.900,694.800" stroke="#1c1c1c" stroke-width="4" fill="none"/>
  <path d="M48,717.800 L61.800,717.800" stroke="#1c1c1c" stroke-width="4" fill="none"/>
  <rect x="1193" y="672" width="30" height="30" rx="4" fill="#fff" stroke="rgba(0,0,0,.10)" stroke-width="1.200"/>
  <rect x="1193" y="712" width="30" height="30" rx="4" fill="#fff" stroke="rgba(0,0,0,.10)" stroke-width="1.200"/>
  <!-- gear -->
  <g transform="translate(1208 687)">
   <g fill="#1a1a1a">
    <rect x="-1.900" y="-10" width="3.800" height="20" rx=".6"/>
    <rect x="-1.900" y="-10" width="3.800" height="20" rx=".6" transform="rotate(45)"/>
    <rect x="-1.900" y="-10" width="3.800" height="20" rx=".6" transform="rotate(90)"/>
    <rect x="-1.900" y="-10" width="3.800" height="20" rx=".6" transform="rotate(135)"/>
    <circle r="8"/>
   </g>
   <circle r="6.200" fill="#fff"/><circle r="4.300" fill="#1a1a1a"/>
  </g>
  <!-- fullscreen -->
  <g transform="translate(1208 727)" fill="#1a1a1a">
   <g id="fa"><path d="M-10,-10 L-3.600,-10 L-5.700,-7.900 L-2.300,-4.500 L-4.500,-2.300 L-7.900,-5.700 L-10,-3.600 Z"/></g>
   <use href="#fa" transform="scale(-1 1)"/><use href="#fa" transform="scale(1 -1)"/><use href="#fa" transform="scale(-1 -1)"/>
  </g>
 </g>
</svg>
</body>
</html>
